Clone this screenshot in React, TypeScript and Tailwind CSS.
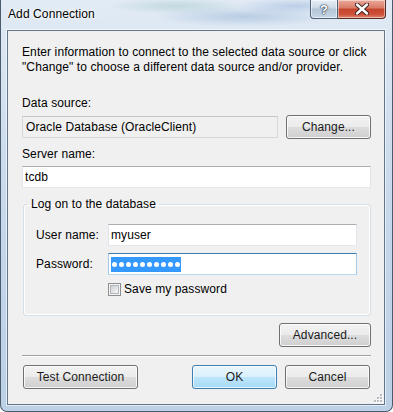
import type { ReactNode } from 'react'

function Btn({ children, className = '', primary = false }: { children: ReactNode; className?: string; primary?: boolean }) {
  return (
    <button
      type="button"
      className={`flex h-[24px] items-center justify-center rounded-[3px] border text-[12px] leading-[15px] text-[#1b1b1b] ${
        primary
          ? 'border-[#3c7fb1] bg-[linear-gradient(180deg,#eaf6fd_0%,#d9f0fc_50%,#bee6fd_50%,#a7d9f5_100%)] shadow-[inset_0_0_0_1px_rgba(255,255,255,0.7)]'
          : 'border-[#707070] bg-[linear-gradient(180deg,#f2f2f2_0%,#ebebeb_50%,#dddddd_50%,#cfcfcf_100%)] shadow-[inset_0_0_0_1px_rgba(255,255,255,0.8)]'
      } ${className}`}
    >
      {children}
    </button>
  )
}

function Grip() {
  const dots = [
    [7, 1],
    [4, 4],
    [7, 4],
    [1, 7],
    [4, 7],
    [7, 7],
  ]
  return (
    <svg width="10" height="10" viewBox="0 0 10 10">
      {dots.map(([x, y]) => (
        <g key={`${x}-${y}`}>
          <rect x={x + 1} y={y + 1} width="2" height="2" fill="#ffffff" />
          <rect x={x} y={y} width="2" height="2" fill="#b9bcc0" />
        </g>
      ))}
    </svg>
  )
}

export default function App() {
  return (
    <div className="h-[412px] w-[393px] font-['Liberation_Sans',Arial,sans-serif] text-[12px] leading-[15px] tracking-[0.1px] text-black">
      <div className="flex h-full flex-col rounded-b-[7px] border-x border-b border-[#4a5b6e] bg-[linear-gradient(180deg,#e2ebf5_0%,#d0deee_30%,#c3d6ea_60%,#bcd0e6_100%)]">
        {/* title bar, blurred aero glass */}
        <div className="flex h-[30px] shrink-0 items-start justify-between bg-[radial-gradient(ellipse_90px_10px_at_62%_55%,rgba(110,150,195,0.35),transparent),radial-gradient(ellipse_70px_8px_at_45%_20%,rgba(120,175,170,0.3),transparent),radial-gradient(ellipse_60px_8px_at_75%_20%,rgba(100,140,200,0.3),transparent)] pl-[7px] pr-[6px]">
          <span className="mt-[7px] [text-shadow:0_0_5px_#ffffff,0_0_2px_#ffffff]">Add Connection</span>
          <div className="flex">
            <div className="flex h-[19px] w-[28px] items-center justify-center rounded-bl-[4px] border border-t-0 border-[#4e6176] bg-[linear-gradient(180deg,#e6eef6_0%,#ccd9e7_45%,#b3c5d8_50%,#c8d7e6_100%)] shadow-[inset_0_0_0_1px_rgba(255,255,255,0.55)]">
              <span className="text-[13px] font-bold leading-none text-white [text-shadow:0_0_1px_#2b3a4a,0_0_1px_#2b3a4a,0_0_2px_#2b3a4a]">?</span>
            </div>
            <div className="flex h-[19px] w-[48px] items-center justify-center rounded-br-[4px] border border-l-0 border-t-0 border-[#5a2a22] bg-[linear-gradient(180deg,#eaa99b_0%,#d97a66_45%,#c4442e_50%,#cf5039_80%,#e08a70_100%)] shadow-[inset_0_0_0_1px_rgba(255,255,255,0.45)]">
              <svg width="14" height="12" viewBox="0 0 14 12">
                <path d="M2 1.5 L12 10.5 M12 1.5 L2 10.5" stroke="#3a2420" strokeWidth="4.4" strokeLinecap="round" />
                <path d="M2 1.5 L12 10.5 M12 1.5 L2 10.5" stroke="#ffffff" strokeWidth="2.4" strokeLinecap="round" />
              </svg>
            </div>
          </div>
        </div>

        {/* client area */}
        <div className="mb-[6px] ml-[6px] mr-[7px] flex flex-1 flex-col border border-[#63758a] bg-[#f0f0f0] pl-[14px] pr-[13px] pt-[14px] shadow-[0_0_0_1px_rgba(255,255,255,0.6)]">
          <p>
            Enter information to connect to the selected data source or click
            <br />
            "Change" to choose a different data source and/or provider.
          </p>

          <div className="mt-[21px]">Data source:</div>
          <div className="mt-[4px] flex items-center justify-between">
            <div className="flex h-[22px] w-[256px] items-center border border-[#d5dadf] border-t-[#c2c6cc] pl-[3px]">
              Oracle Database (OracleClient)
            </div>
            <Btn className="w-[85px]">Change...</Btn>
          </div>

          <div className="mt-[8px]">Server name:</div>
          <div className="mt-[4px] flex h-[22px] items-center border border-[#e2e3ea] border-b-[#e3e9ef] border-t-[#abadb3] bg-white pl-[2px]">
            tcdb
          </div>

          <fieldset className="m-0 ml-px mt-[9px] rounded-[3px] border border-[#d5dfe5] p-0 pb-[18px] shadow-[inset_0_0_0_1px_#ffffff]">
            <legend className="ml-[4px] px-[3px]">Log on to the database</legend>
            <div className="pl-[12px] pr-[13px]">
              <div className="mt-[12px] flex items-center">
                <span className="w-[72px]">User name:</span>
                <div className="flex h-[22px] flex-1 items-center border border-[#e2e3ea] border-b-[#e3e9ef] border-t-[#abadb3] bg-white pl-[2px]">
                  myuser
                </div>
              </div>
              <div className="mt-[7px] flex items-center">
                <span className="w-[72px]">Password:</span>
                <div className="flex h-[22px] flex-1 items-center border border-[#a4c9e3] border-b-[#b7d9ed] border-t-[#3d7bad] bg-white pl-[2px]">
                  <span className="flex h-[15px] items-center gap-[2px] bg-[#3399ff] px-[1px]">
                    {Array.from({ length: 10 }).map((_, i) => (
                      <span key={i} className="h-[5px] w-[5px] rounded-full bg-white" />
                    ))}
                  </span>
                </div>
              </div>
              <div className="mt-[7px] flex h-[15px] items-center pl-[72px]">
                <span className="flex h-[13px] w-[13px] items-center justify-center border border-[#8f8f8f] bg-[#f4f4f4]">
                  <span className="h-[9px] w-[9px] border border-[#b4b8bd] bg-[linear-gradient(135deg,#cbcfd5,#f7f7f7)]" />
                </span>
                <span className="ml-[3px]">Save my password</span>
              </div>
            </div>
          </fieldset>

          <div className="mt-[7px] flex justify-end">
            <Btn className="w-[92px]">Advanced...</Btn>
          </div>

          <div className="mt-[8px] border-b border-t border-b-white border-t-[#a0a0a0]" />

          <div className="mt-[8px] flex items-center pl-px pr-px">
            <Btn className="w-[115px]">Test Connection</Btn>
            <div className="flex-1" />
            <Btn primary className="w-[85px]">OK</Btn>
            <Btn className="ml-[8px] w-[85px]">Cancel</Btn>
          </div>

          <div className="-mr-[12px] mt-[4px] flex justify-end">
            <Grip />
          </div>
        </div>
      </div>
    </div>
  )
}
